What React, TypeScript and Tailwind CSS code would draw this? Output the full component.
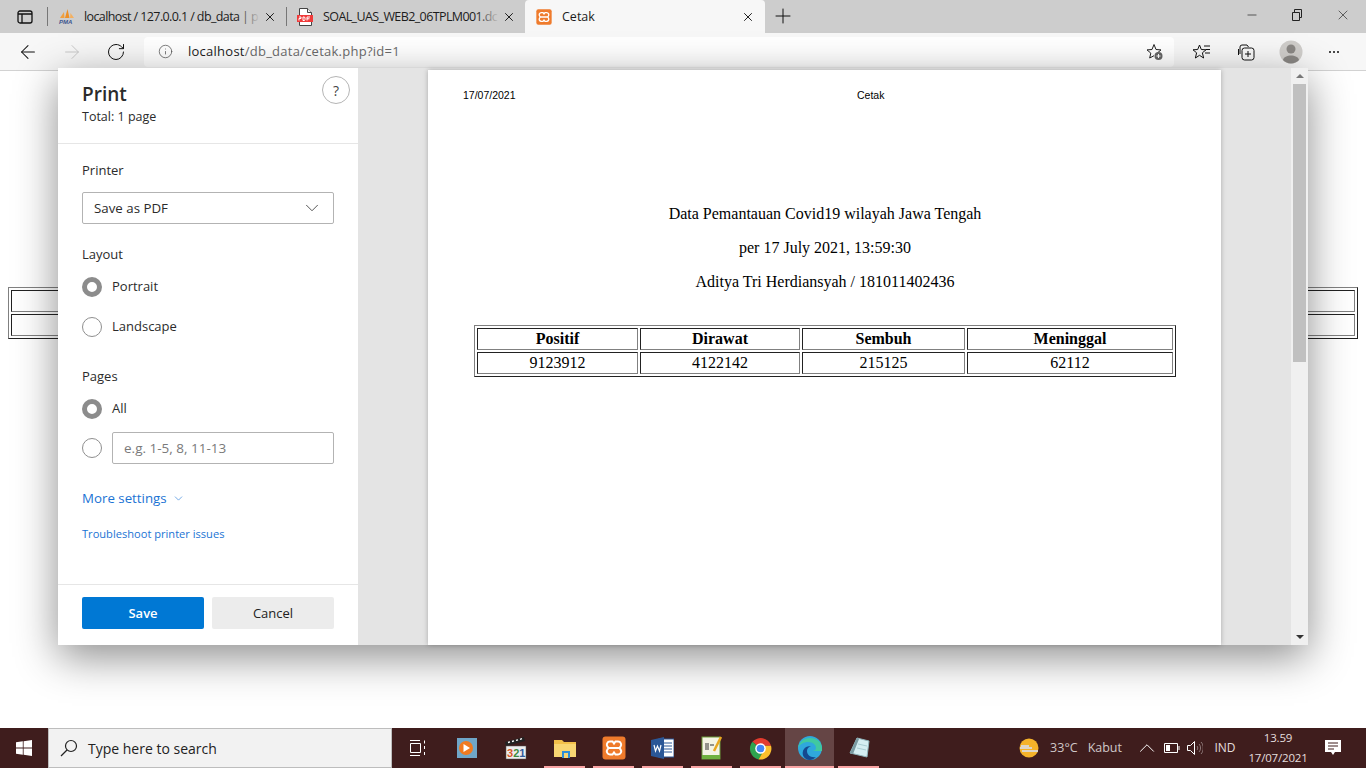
import React from 'react';
import { ArrowLeft, ArrowRight, ChevronDown, ChevronUp, Info, Minus, Plus, RotateCw, X } from 'lucide-react';

const XamppIcon = ({ size = 16 }: { size?: number }) => (
  <svg width={size} height={size} viewBox="0 0 24 24">
    <rect x="0.5" y="0.5" width="23" height="23" rx="3" fill="#ef7b2c" />
    <path d="M8 5.5h2.500L12 7.500l1.500-2H16a3.200 3.200 0 0 1 2.500 5.200L17.500 12l1 1.300A3.200 3.200 0 0 1 16 18.500h-2.500l-1.500-2-1.500 2H8a3.200 3.200 0 0 1-2.500-5.200l1-1.300-1-1.300A3.200 3.200 0 0 1 8 5.500ZM6.500 12h11" fill="none" stroke="#fff" strokeWidth="2" />
  </svg>
);

const PmaIcon = () => (
  <svg width="17" height="17" viewBox="0 0 17 17">
    <path d="M2 10 6 4l.5 6Z" fill="#f0a040" />
    <path d="M7 10 9.500 1l2 9Z" fill="#ee8f25" />
    <path d="M12 10 12.500 5l3.500 5Z" fill="#f4b060" />
    <text x="1" y="16" fontSize="6" fontWeight="700" fontStyle="italic" fill="#3d5590" fontFamily="Liberation Sans, sans-serif">PMA</text>
  </svg>
);

const PdfIcon = () => (
  <svg width="16" height="18" viewBox="0 0 16 18">
    <path d="M2.500.500h8l4 4v13h-12Z" fill="#fff" stroke="#444" />
    <path d="M10.500.500v4h4" fill="#eee" stroke="#444" />
    <rect x="0" y="7" width="16" height="7" fill="#f03a3a" />
    <path d="M2 9h2v1.500H2v2M6 9v3.500h1.500l.5-1v-1.500l-.5-1ZM10 12.500V9h3M10 10.800h2.500" fill="none" stroke="#fff" strokeWidth="1" />
  </svg>
);

const WinLogo = () => (
  <svg width="16" height="16" viewBox="0 0 16 16" fill="#fff">
    <path d="M0 2.300 6.800 1.300v6.300H0ZM7.600 1.200 16 0v7.600H7.600ZM0 8.400h6.800v6.300L0 13.700ZM7.600 8.400H16V16l-8.400-1.200Z" />
  </svg>
);

const TaskIcon = ({ children, underline, active }: { children: React.ReactNode; underline?: boolean; active?: boolean }) => (
  <div className={`relative flex h-full w-[49px] items-center justify-center ${active ? 'bg-[#654545]' : ''}`}>
    {children}
    {underline && <div className={`absolute bottom-0 h-[2px] bg-[#f9a4a4] ${active ? 'inset-x-0' : 'inset-x-[4px]'}`} />}
  </div>
);

const Radio = ({ checked }: { checked?: boolean }) => (
  <div className={`h-[20px] w-[20px] shrink-0 rounded-full bg-white ${checked ? 'border-[5px] border-[#8c8c8c]' : 'border border-[#8f8f8f]'}`} />
);

const Tab = ({ icon, title, active }: { icon: React.ReactNode; title: string; active?: boolean }) => (
  <div className={`flex h-full items-center ${active ? 'w-[240px] rounded-t-[4px] bg-[#f7f7f7] pl-[11px]' : 'w-[238px] pl-[10px]'}`}>
    <div className="flex w-[26px] shrink-0 items-center">{icon}</div>
    <div className={`relative h-[18px] w-[176px] whitespace-nowrap text-[12.500px] leading-[18px] text-[#1c1c1c] ${active ? '' : 'tracking-[-0.6px]'}`}>
      {title}
      {!active && <div className="absolute inset-y-0 right-0 w-[22px] bg-gradient-to-r from-transparent to-[#cdcdcd]" />}
    </div>
    <X size={14} strokeWidth={1.600} className="ml-[3px] text-[#111]" />
  </div>
);

const columns = [
  { title: 'Positif', value: '9123912', width: 'w-[161px]' },
  { title: 'Dirawat', value: '4122142', width: 'w-[160px]' },
  { title: 'Sembuh', value: '215125', width: 'w-[163px]' },
  { title: 'Meninggal', value: '62112', width: 'w-[206px]' },
];

const App: React.FC = () => {
  return (
    <div className="relative flex h-[768px] w-[1366px] flex-col overflow-hidden bg-white font-['Open_Sans',sans-serif]">
      {/* tab strip */}
      <div className="flex h-[33px] shrink-0 items-end bg-[#cdcdcd]">
        <svg width="16" height="14" viewBox="0 0 16 14" fill="none" stroke="#111" strokeWidth="1.300" className="mb-[9px] ml-[17px] shrink-0">
          <rect x="1" y="1" width="14" height="12" rx="2" />
          <path d="M1 4h14M5 4v9" />
        </svg>
        <div className="mb-[7px] ml-[14px] h-[19px] w-px bg-[#777]" />
        <Tab icon={<PmaIcon />} title="localhost / 127.0.0.1 / db_data | p" />
        <div className="mb-[7px] h-[19px] w-px bg-[#777]" />
        <Tab icon={<PdfIcon />} title="SOAL_UAS_WEB2_06TPLM001.dc" />
        <Tab icon={<XamppIcon />} title="Cetak" active />
        <Plus size={24} strokeWidth={1} className="mb-[5px] ml-[6px] text-[#111]" />
        <div className="mb-[10px] ml-auto flex items-center gap-[30px] pr-[15px]">
          <Minus size={14} strokeWidth={1.200} className="text-[#222]" />
          <svg width="12" height="12" viewBox="0 0 12 12" fill="none" stroke="#222" className="mx-[2px]">
            <path d="M1.500 3.500h7v8h-7ZM3.500 3.500v-3h7v8h-2" />
          </svg>
          <X size={16} strokeWidth={1} className="text-[#222]" />
        </div>
      </div>

      {/* address bar */}
      <div className="flex h-[38px] shrink-0 items-center border-b border-[#d2d2d2] bg-[#f7f7f7]">
        <ArrowLeft size={22} strokeWidth={1.100} className="ml-[17px] text-[#111]" />
        <ArrowRight size={22} strokeWidth={1} className="ml-[22px] text-[#c4c4c4]" />
        <RotateCw size={20} strokeWidth={1.200} className="ml-[23px] text-[#111]" />
        <div className="ml-[18px] flex h-[30px] w-[1030px] items-center rounded-[4px] bg-white">
          <Info size={15} strokeWidth={1.200} className="ml-[14px] text-[#555]" />
          <span className="ml-[15px] text-[13px] tracking-[0.25px] text-[#1c1c1c]">
            localhost<span className="text-[#6b6b6b]">/db_data/cetak.php?id=1</span>
          </span>
          <svg width="18" height="18" viewBox="0 0 18 18" className="ml-auto mr-[10px]" fill="none" stroke="#222">
            <path d="M8 1.500 10 6.500l5 .4-3.800 3.200L12 14l-1 .2M8 1.500 6 6.500l-5 .4 3.800 3.200L3.700 15 8 12.700" />
            <circle cx="12.500" cy="13" r="4" fill="#666" stroke="none" />
            <path d="M12.500 11v4M10.500 13h4" stroke="#fff" />
          </svg>
        </div>
        <svg width="18" height="18" viewBox="0 0 18 18" className="ml-[19px]" fill="none" stroke="#111">
          <path d="M6.500 2 8.300 6.500l4.700.3-3.600 3L10.600 15l-4.100-2.700L2.400 15l1.200-5.200L0 6.800l4.700-.3ZM11 3h6M13 6.500h4M12 10h5" />
        </svg>
        <svg width="18" height="18" viewBox="0 0 18 18" className="ml-[26px]" fill="none" stroke="#111">
          <path d="M3 11V4a2 2 0 0 1 2-2h5l1.500 2M1.500 12V6" />
          <rect x="5" y="5" width="12" height="12" rx="2.500" />
          <path d="M11 8v6M8 11h6" />
        </svg>
        <svg width="24" height="24" viewBox="0 0 24 24" className="ml-[24px]">
          <circle cx="12" cy="12" r="11.500" fill="#cfcdca" />
          <circle cx="12" cy="9" r="4.500" fill="#8a8784" />
          <path d="M4 20c1-6 15-6 16 0a11 11 0 0 1-16 0Z" fill="#8a8784" />
        </svg>
        <div className="ml-[26px] flex gap-[2px]">
          <div className="h-[2px] w-[2px] rounded-full bg-[#111]" />
          <div className="h-[2px] w-[2px] rounded-full bg-[#111]" />
          <div className="h-[2px] w-[2px] rounded-full bg-[#111]" />
        </div>
      </div>

      {/* page behind the dialog */}
      <div className="flex-1 px-[8px] pt-[216px]">
        <div className="border border-[#808080] border-b-[#222] border-r-[#222] p-[2px]">
          <div className="mb-[2px] h-[22px] border border-[#222] border-b-[#808080] border-r-[#808080]" />
          <div className="h-[22px] border border-[#222] border-b-[#808080] border-r-[#808080]" />
        </div>
      </div>

      {/* taskbar */}
      <div className="flex h-[40px] shrink-0 items-center bg-[#3f1d1d]">
        <div className="flex h-full w-[48px] items-center justify-center"><WinLogo /></div>
        <div className="flex h-full w-[344px] items-center border border-[#bdbdbd] bg-[#f2f2f2] pl-[11px]">
          <svg width="18" height="18" viewBox="0 0 18 18" fill="none" stroke="#222" strokeWidth="1.200">
            <circle cx="11" cy="7" r="5.500" />
            <path d="M7 11 1 17" />
          </svg>
          <span className="ml-[10px] pt-px text-[14px] text-[#222]">Type here to search</span>
        </div>
        <div className="ml-px flex h-full">
          <TaskIcon>
            <svg width="17" height="16" viewBox="0 0 17 16" fill="none" stroke="#fff">
              <path d="M1 .500h10M1 15.500h10M1.500 3.500h10v9h-10ZM15.500 .500v3M15.500 6v3M15.500 12v3" />
            </svg>
          </TaskIcon>
          <TaskIcon>
            <svg width="20" height="20" viewBox="0 0 20 20">
              <rect width="20" height="20" fill="#6fa6c8" />
              <circle cx="9" cy="10" r="7" fill="#f07a20" />
              <path d="M6.500 6v8l6.500-4Z" fill="#fff" />
            </svg>
          </TaskIcon>
          <TaskIcon>
            <svg width="24" height="24" viewBox="0 0 24 24">
              <path d="M1 6 20 1l1 4L2 10Z" fill="#222" />
              <path d="M4 6.500l2-.6M8 5.500l2-.6M12 4.400l2-.6M16 3.300l2-.6" stroke="#fff" strokeWidth="1.400" />
              <rect x="2" y="10" width="20" height="13" fill="#eee" stroke="#555" strokeWidth="0.500" />
              <text x="3" y="21" fontSize="11" fontWeight="700" fontFamily="Liberation Sans, sans-serif">
                <tspan fill="#d8582a">3</tspan>
                <tspan fill="#3e8a3e">2</tspan>
                <tspan fill="#2e5c9c">1</tspan>
              </text>
            </svg>
          </TaskIcon>
          <TaskIcon underline>
            <svg width="22" height="20" viewBox="0 0 22 20">
              <path d="M0 2h8l2 2h12v15H0Z" fill="#f2c04a" />
              <rect y="6" width="22" height="13" fill="#f8d672" />
              <rect x="8" y="13" width="8" height="7" fill="#2f8fd8" />
              <rect x="10" y="15" width="4" height="5" fill="#f8d672" />
            </svg>
          </TaskIcon>
          <TaskIcon underline><XamppIcon size={24} /></TaskIcon>
          <TaskIcon underline>
            <svg width="23" height="22" viewBox="0 0 23 22">
              <rect x="8" y="2" width="15" height="18" fill="#fff" stroke="#2b5797" />
              <path d="M13 6h8M13 9h8M13 12h8M13 15h8" stroke="#2b5797" />
              <path d="M0 3 13 0v22L0 19Z" fill="#2b5797" />
              <path d="M3 8l1.500 6 2-5 2 5L10 8" fill="none" stroke="#fff" strokeWidth="1.200" />
            </svg>
          </TaskIcon>
          <TaskIcon underline>
            <svg width="22" height="24" viewBox="0 0 22 24">
              <rect x="1" y="1" width="18" height="22" fill="#f4f4e4" stroke="#6a9a3a" />
              <rect x="1" y="19" width="18" height="4" fill="#6fb23f" />
              <path d="M5 7v7M7 7v7M9 9h4" stroke="#333" />
              <path d="M20 1 13 15" stroke="#e9a820" strokeWidth="2.500" />
            </svg>
          </TaskIcon>
          <TaskIcon underline>
            <svg width="23" height="23" viewBox="0 0 24 24">
              <path d="M12 12 3.500 5A11.500 11.500 0 0 1 23 9H12Z" fill="#e33b2e" />
              <path d="M12 12 3.500 5A11.500 11.500 0 0 0 10 23.400L15 15Z" fill="#2ea44f" />
              <path d="M12 9h11A11.500 11.500 0 0 1 10 23.400L16 13Z" fill="#fbc02d" />
              <circle cx="12" cy="12" r="5.500" fill="#fff" />
              <circle cx="12" cy="12" r="4" fill="#4285f4" />
            </svg>
          </TaskIcon>
          <TaskIcon underline active>
            <svg width="24" height="24" viewBox="0 0 24 24">
              <circle cx="12" cy="12" r="12" fill="#2fa8dc" />
              <path d="M24 13c0-7-5-11-12-11C6 2 1 6 0 12c2-4 6-6 10-6 5 0 8 3 8 6 0 2-2 3-4 3h10Z" fill="#40c9a0" />
              <path d="M12 24C5 24 3 17 6 13c1-2 4-3 7-3-3 1-4 3-4 5 0 4 4 7 9 6-2 2-4 3-6 3Z" fill="#14498f" />
            </svg>
          </TaskIcon>
          <TaskIcon underline>
            <svg width="24" height="24" viewBox="0 0 24 24">
              <path d="M10 2 22 5l-2 16L3 17Z" fill="#d5eef2" stroke="#8fb4bb" />
              <path d="M10 2 3 17l3 1L12 3Z" fill="#7a9aa2" />
              <path d="M11 8l9 2M10 12l9 2" stroke="#a9cdd3" />
            </svg>
          </TaskIcon>
        </div>
        <div className="ml-auto flex h-full items-center text-[#e4dede]">
          <svg width="20" height="20" viewBox="0 0 20 20">
            <circle cx="10" cy="10" r="9.500" fill="#f5b32a" />
            <path d="M1 10h12M3 13h16M2 8h8" stroke="#ded6c8" strokeWidth="2" />
          </svg>
          <span className="ml-[11px] text-[12.500px] text-[#cfc8c8]">33°C</span>
          <span className="ml-[10px] text-[12.500px] text-[#cfc8c8]">Kabut</span>
          <ChevronUp size={26} strokeWidth={0.900} className="ml-[12px] text-white" />
          <svg width="16" height="10" viewBox="0 0 16 10" fill="none" stroke="#fff" className="ml-[4px]">
            <path d="M.500.500h13v9H.500Z" />
            <rect x="2" y="2" width="4" height="6" fill="#fff" stroke="none" />
            <path d="M15 3v4" />
          </svg>
          <svg width="16" height="14" viewBox="0 0 16 14" fill="none" stroke="#fff" className="ml-[7px]">
            <path d="M.500 4.500h3l4-4v13l-4-4h-3Z" />
            <path d="M10 5c1 1 1 3 0 4M12 3c2 2 2 6 0 8M14 1c3 3 3 9 0 12" stroke="#8f7b7b" />
          </svg>
          <span className="ml-[10px] w-[24px] text-center text-[12px]">IND</span>
          <div className="ml-[11px] flex w-[60px] flex-col items-center text-[11.500px] leading-[20px] tracking-[-0.2px]">
            <span>13.59</span>
            <span>17/07/2021</span>
          </div>
          <svg width="16" height="16" viewBox="0 0 16 16" className="ml-[17px] mr-[25px]">
            <path d="M0 0h16v12h-6l-2 3-2-3H0Z" fill="#fff" />
            <path d="M3 3h10M3 6h10M3 9h6" stroke="#3f1d1d" />
          </svg>
        </div>
      </div>

      {/* print dialog */}
      <div className="absolute left-[58px] top-[68px] flex h-[577px] w-[1250px] shadow-[0_12px_40px_rgba(0,0,0,0.45)]">
        <div className="relative flex w-[300px] shrink-0 flex-col bg-white text-[#2b2b2b]">
          <div className="border-b border-[#e6e6e6] px-[24px] pb-[16px] pt-[13px]">
            <div className="text-[19px] font-semibold leading-[26px]">Print</div>
            <div className="text-[12.500px] leading-[20px]">Total: 1 page</div>
          </div>
          <div className="absolute right-[8px] top-[8px] flex h-[28px] w-[28px] items-center justify-center rounded-full border border-[#b5b5b5] text-[14px] text-[#444]">?</div>

          <div className="flex flex-1 flex-col px-[24px]">
            <div className="mt-[16px] text-[13px] font-medium leading-[20px]">Printer</div>
            <div className="mt-[12px] flex h-[32px] items-center justify-between rounded-[2px] border border-[#b3b3b3] pl-[11px] pr-[10px] text-[13.300px]">
              <span className="pt-px">Save as PDF</span>
              <ChevronDown size={22} strokeWidth={0.900} className="text-[#333]" />
            </div>
            <div className="mt-[20px] text-[13px] font-medium leading-[20px]">Layout</div>
            <div className="mt-[12px] flex h-[21px] items-center gap-[10px] text-[13px]"><Radio checked />Portrait</div>
            <div className="mt-[19px] flex h-[21px] items-center gap-[10px] text-[13px]"><Radio />Landscape</div>
            <div className="mt-[29px] text-[13px] font-medium leading-[20px]">Pages</div>
            <div className="mt-[12px] flex h-[21px] items-center gap-[10px] text-[13px]"><Radio checked />All</div>
            <div className="mt-[13px] flex items-center gap-[10px]">
              <Radio />
              <div className="flex h-[32px] flex-1 items-center rounded-[2px] border border-[#b3b3b3] pl-[11px] pt-px text-[13.500px] text-[#7a7a7a]">e.g. 1-5, 8, 11-13</div>
            </div>
            <div className="mt-[24px] flex items-center gap-[5px] text-[13.300px] leading-[20px] text-[#1a73d4]">
              More settings
              <ChevronDown size={13} strokeWidth={1.100} />
            </div>
            <div className="mt-[17px] text-[11.100px] leading-[18px] text-[#1a73d4]">Troubleshoot printer issues</div>
          </div>

          <div className="flex gap-[8px] border-t border-[#e6e6e6] px-[24px] pb-[16px] pt-[12px]">
            <div className="flex h-[32px] w-[122px] items-center justify-center rounded-[2px] bg-[#0078d4] pt-px text-[13px] font-semibold text-white">Save</div>
            <div className="flex h-[32px] w-[122px] items-center justify-center rounded-[2px] bg-[#ececec] pt-px text-[13px] font-medium text-[#222]">Cancel</div>
          </div>
        </div>

        {/* preview */}
        <div className="flex min-w-0 flex-1 bg-[#e4e4e4]">
          <div className="ml-[70px] mt-[2px] w-[793px] bg-white shadow-[0_0_5px_rgba(0,0,0,0.25)]">
            <div className="relative mx-[35px] mt-[18px] font-['Liberation_Sans',sans-serif] text-[10.500px] leading-[14px] text-black">
              17/07/2021
              <span className="absolute left-[394px] top-0">Cetak</span>
            </div>
            <div className="mt-[103px] text-center font-['Liberation_Serif',serif] text-[16px] leading-[18px] text-black">
              <div className="pl-[1px]">
                <p>Data Pemantauan Covid19 wilayah Jawa Tengah</p>
                <p className="mt-[16px]">per 17 July 2021, 13:59:30</p>
                <p className="mt-[16px]">Aditya Tri Herdiansyah / 181011402436</p>
              </div>
              <table className="ml-[46px] mt-[34px] w-[702px] table-fixed border-separate border-spacing-[2px] border border-[#808080] border-b-[#222] border-r-[#222]">
                <tbody>
                  <tr>
                    {columns.map((col) => (
                      <th key={col.title} className={`${col.width} h-[22px] border border-[#222] border-b-[#808080] border-r-[#808080] p-0 font-bold leading-[18px]`}>{col.title}</th>
                    ))}
                  </tr>
                  <tr>
                    {columns.map((col) => (
                      <td key={col.title} className="h-[22px] border border-[#222] border-b-[#808080] border-r-[#808080] p-0 leading-[18px]">{col.value}</td>
                    ))}
                  </tr>
                </tbody>
              </table>
            </div>
          </div>
          <div className="ml-auto flex w-[17px] flex-col items-center bg-[#f0f0f0]">
            <div className="mt-[6px] h-0 w-0 border-x-[4px] border-b-[4px] border-x-transparent border-b-[#777]" />
            <div className="mt-[6px] h-[278px] w-[13px] bg-[#c0c0c0]" />
            <div className="mb-[6px] mt-auto h-0 w-0 border-x-[4px] border-t-[4px] border-x-transparent border-t-[#333]" />
          </div>
        </div>
      </div>
    </div>
  );
};

export default App;
